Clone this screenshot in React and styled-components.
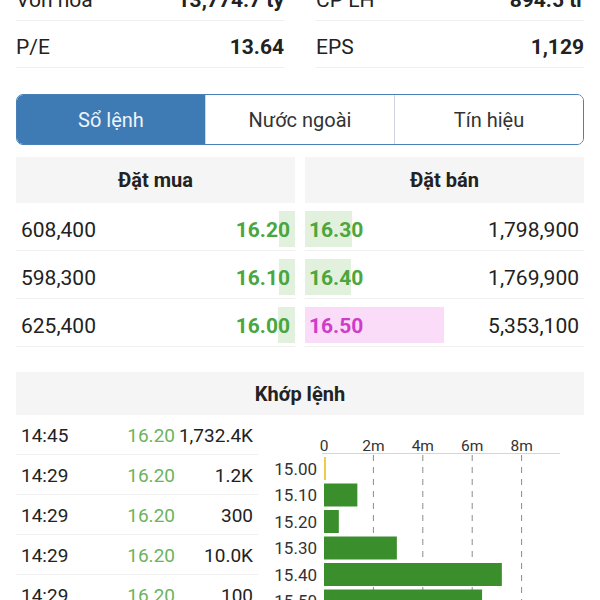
import React from "react"
import styled, {createGlobalStyle} from "styled-components"

const Global = createGlobalStyle`
  * {
    box-sizing: border-box;
  }
  body {
    margin: 0;
    background: #ffffff;
    font-family: Roboto, "Noto Sans", "Liberation Sans", sans-serif;
    color: #222222;
  }
  #root {
    width: 600px;
    height: 600px;
    overflow: hidden;
  }
`

const Page = styled.div`
  padding: 0 16px;
`

const Stats = styled.div`
  display: grid;
  grid-template-columns: 1fr 1fr;
  column-gap: 32px;
  margin-top: -26px;
`

const StatRow = styled.div`
  display: flex;
  justify-content: space-between;
  align-items: center;
  height: 47px;
  border-bottom: 1px solid #efefef;
  font-size: 21px;
  padding-top: 5px;
`

const StatValue = styled.span`
  font-weight: 700;
`

const Tabs = styled.div`
  display: flex;
  margin-top: 26px;
  height: 51px;
  border: 1px solid #4a80b5;
  border-radius: 7px;
  overflow: hidden;
`

const Tab = styled.div`
  flex: 1;
  display: flex;
  align-items: center;
  justify-content: center;
  font-size: 20px;
  color: ${props => (props.active ? "#eef4fa" : "#333333")};
  background: ${props => (props.active ? "#3e7bb5" : "#ffffff")};
  & + & {
    border-left: 1px solid #cfd6dd;
  }
`

const Book = styled.div`
  display: grid;
  grid-template-columns: 1fr 1fr;
  column-gap: 10px;
  margin-top: 12px;
`

const Header = styled.div`
  display: flex;
  align-items: center;
  justify-content: center;
  height: ${props => props.h || 46}px;
  background: #f5f5f5;
  font-size: 20px;
  font-weight: 700;
  color: #222222;
`

const OrderRow = styled.div`
  position: relative;
  display: flex;
  justify-content: space-between;
  align-items: center;
  height: 48px;
  padding: 7px 5px 0 ${props => (props.side === "sell" ? "4px" : "5px")};
  border-bottom: 1px solid #f0f0f0;
  font-size: 21px;
`

const Bar = styled.div`
  position: absolute;
  top: 8px;
  height: 36px;
  ${props => (props.side === "sell" ? "left: 0;" : "right: 0;")}
  background: ${props => (props.tone === "ceil" ? "#fadcf9" : "#e2f1dd")};
`

const Price = styled.span`
  position: relative;
  font-weight: 700;
  color: ${props => (props.tone === "ceil" ? "#cf3ccc" : "#4aa63d")};
`

const Qty = styled.span`
  position: relative;
  color: #222222;
`

const Match = styled.div`
  margin-top: 25px;
`

const MatchBody = styled.div`
  display: grid;
  grid-template-columns: 242px 1fr;
  column-gap: 12px;
`

const TradeRow = styled.div`
  display: grid;
  grid-template-columns: 1fr 60px 78px;
  align-items: center;
  height: 40px;
  padding: 2px 5px 0;
  border-bottom: 1px solid #f0f0f0;
  font-size: 19px;
  color: #222222;
`

const TradePrice = styled.span`
  text-align: right;
  color: #6cb35a;
`

const TradeVol = styled.span`
  text-align: right;
`

const buys = [
  {qty: "608,400", price: "16.20", w: 16},
  {qty: "598,300", price: "16.10", w: 16},
  {qty: "625,400", price: "16.00", w: 17}
]

const sells = [
  {qty: "1,798,900", price: "16.30", w: 47},
  {qty: "1,769,900", price: "16.40", w: 46},
  {qty: "5,353,100", price: "16.50", w: 139, tone: "ceil"}
]

const trades = [
  ["14:45", "16.20", "1,732.4K"],
  ["14:29", "16.20", "1.2K"],
  ["14:29", "16.20", "300"],
  ["14:29", "16.20", "10.0K"],
  ["14:29", "16.20", "100"]
]

const volumes = [
  ["15.00", 0.06, "#f2c94c"],
  ["15.10", 1.35],
  ["15.20", 0.6],
  ["15.30", 2.95],
  ["15.40", 7.2],
  ["15.50", 6.4]
]

const VolumeChart = () => {
  const x0 = 54
  const per = 24.7
  return (
    <svg width="314" height="190" style={{display: "block"}}>
      <g fontFamily="Roboto, 'Liberation Sans', sans-serif" fill="#333">
        {[0, 2, 4, 6, 8].map(v => (
          <text key={v} x={x0 + v * per} y="36" fontSize="15.5" textAnchor="middle">
            {v === 0 ? "0" : v + "m"}
          </text>
        ))}
        {volumes.map(([p], i) => (
          <text key={p} x="47" y={59.5 + i * 26.5} fontSize="17" textAnchor="end">
            {p}
          </text>
        ))}
      </g>
      <line x1={x0 - 2} y1="38.5" x2="290" y2="38.5" stroke="#d6d6d6" />
      {[2, 4, 6, 8].map(v => (
        <line
          key={v}
          x1={x0 + v * per}
          y1="40"
          x2={x0 + v * per}
          y2="190"
          stroke="#8a8a8a"
          strokeWidth="1"
          strokeDasharray="6 6"
        />
      ))}
      {volumes.map(([p, v, c], i) => (
        <rect
          key={p}
          x={x0}
          y={42 + i * 26.5}
          width={Math.max(2, v * per)}
          height="23"
          fill={c || "#3b8e2c"}
        />
      ))}
    </svg>
  )
}

export default function App() {
  return (
    <>
      <Global />
      <Page>
        <Stats>
          <StatRow>
            <span>Vốn hóa</span>
            <StatValue>13,774.7 tỷ</StatValue>
          </StatRow>
          <StatRow>
            <span>CP LH</span>
            <StatValue>894.5 tr</StatValue>
          </StatRow>
          <StatRow>
            <span>P/E</span>
            <StatValue>13.64</StatValue>
          </StatRow>
          <StatRow>
            <span>EPS</span>
            <StatValue>1,129</StatValue>
          </StatRow>
        </Stats>

        <Tabs>
          <Tab active>Sổ lệnh</Tab>
          <Tab>Nước ngoài</Tab>
          <Tab>Tín hiệu</Tab>
        </Tabs>

        <Book>
          <div>
            <Header>Đặt mua</Header>
            {buys.map(r => (
              <OrderRow key={r.price}>
                <Bar style={{width: r.w}} />
                <Qty>{r.qty}</Qty>
                <Price>{r.price}</Price>
              </OrderRow>
            ))}
          </div>
          <div>
            <Header>Đặt bán</Header>
            {sells.map(r => (
              <OrderRow key={r.price} side="sell">
                <Bar side="sell" tone={r.tone} style={{width: r.w}} />
                <Price tone={r.tone}>{r.price}</Price>
                <Qty>{r.qty}</Qty>
              </OrderRow>
            ))}
          </div>
        </Book>

        <Match>
          <Header h={43}>Khớp lệnh</Header>
          <MatchBody>
            <div>
              {trades.map((t, i) => (
                <TradeRow key={i}>
                  <span>{t[0]}</span>
                  <TradePrice>{t[1]}</TradePrice>
                  <TradeVol>{t[2]}</TradeVol>
                </TradeRow>
              ))}
            </div>
            <VolumeChart />
          </MatchBody>
        </Match>
      </Page>
    </>
  )
}
